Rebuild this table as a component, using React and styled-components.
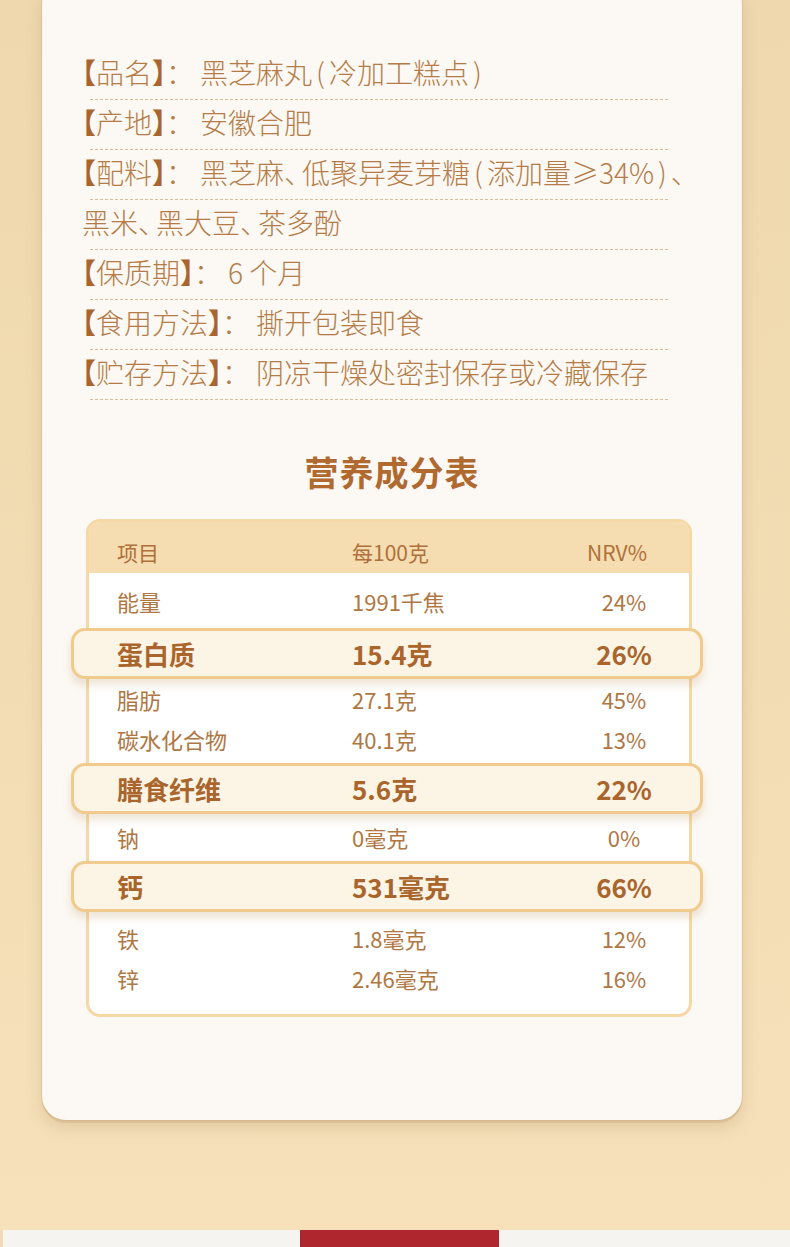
import React from "react";
import styled, { createGlobalStyle } from "styled-components";

const Global = createGlobalStyle`
  html, body { margin: 0; padding: 0; }
  body {
    background: #f2dcb3;
    font-family: "Noto Sans CJK SC", "Noto Sans", sans-serif;
  }
`;

const Page = styled.div`
  width: 790px;
  height: 1247px;
  overflow: hidden;
  display: flex;
  flex-direction: column;
  background: linear-gradient(180deg, #efd8ae 0%, #f3ddb4 60%, #f6e1bb 100%);
`;

const Card = styled.div`
  margin: -20px 0 0 42px;
  width: 700px;
  box-sizing: border-box;
  padding: 70px 40px 103px;
  background: #fcf9f4;
  border-radius: 24px;
  box-shadow: 0 0 0 1px rgba(205, 168, 120, 0.35), 0 3px 0 #dcc198,
    0 8px 16px rgba(160, 120, 70, 0.22);
  display: flex;
  flex-direction: column;
`;

const InfoList = styled.div`
  display: flex;
  flex-direction: column;
`;

const InfoRow = styled.div`
  height: 49px;
  display: flex;
  align-items: flex-start;
  font-size: 28px;
  line-height: 44px;
  font-weight: 300;
  color: #b57c48;
  white-space: nowrap;
  font-feature-settings: "halt";
`;

const Divider = styled.div`
  height: 1px;
  margin-left: 8px;
  width: 578px;
  background: repeating-linear-gradient(
    to right,
    #dcbc9c 0 3px,
    transparent 3px 5px
  );
`;

const Bracket = styled.span`
  color: #a9652d;
  font-weight: 700;
`;

const Colon = styled.span`
  margin-right: 20px;
`;

const Dun = styled.span`
  margin-right: 4px;
`;

const Paren = styled.span`
  margin: 0 4px;
`;

const Title = styled.h2`
  margin: 52px 0 0;
  text-align: center;
  font-size: 34px;
  line-height: 40px;
  font-weight: 700;
  color: #b0692f;
  letter-spacing: 1px;
`;

const Table = styled.div`
  margin: 27px 0 0 4px;
  width: 606px;
  box-sizing: border-box;
  border: 3px solid #f6d8a4;
  border-radius: 14px;
  background: #ffffff;
  padding-bottom: 16px;
  display: flex;
  flex-direction: column;
`;

const Grid = styled.div`
  display: grid;
  grid-template-columns: 235px 200px 144px;
  align-items: center;
  box-sizing: border-box;
`;

const Header = styled(Grid)`
  height: 51px;
  padding: 8px 0 0 28px;
  background: #f5dcb1;
  border-radius: 11px 11px 0 0;
  font-size: 21px;
  color: #b0703a;
`;

const Row = styled(Grid)`
  height: 40px;
  padding-left: 28px;
  margin-top: ${(p) => p.$mt || 0}px;
  margin-bottom: ${(p) => p.$mb || 0}px;
  font-size: 22px;
  color: #b07743;
`;

const Pill = styled(Grid)`
  position: relative;
  z-index: 1;
  height: 51px;
  margin: 0 -14px 0 -18px;
  padding-left: 43px;
  background: #fcf4e4;
  border: 3px solid #f0cb8d;
  border-radius: 14px;
  box-shadow: 0 6px 9px rgba(190, 150, 100, 0.25);
  font-size: 26px;
  font-weight: 700;
  color: #a9652c;
`;

const Cell = styled.span`
  white-space: nowrap;
  text-align: ${(p) => (p.$center ? "center" : "left")};
  padding-right: ${(p) => p.$shift || 0}px;
`;

const Spacer = styled.div`
  flex: 1;
`;

const Strip = styled.div`
  height: 17px;
  display: grid;
  grid-template-columns: 3px 297px 199px 1fr;
`;

const StripPart = styled.div`
  background: ${(p) => p.$c};
`;

const info = [
  {
    label: "品名",
    value: (
      <>
        黑芝麻丸<Paren>(</Paren>冷加工糕点<Paren>)</Paren>
      </>
    ),
  },
  { label: "产地", value: "安徽合肥" },
  {
    label: "配料",
    value: (
      <>
        黑芝麻<Dun>、</Dun>低聚异麦芽糖<Paren>(</Paren>添加量≥34%
        <Paren>)</Paren>
        <Dun>、</Dun>
      </>
    ),
  },
  {
    value: (
      <>
        黑米<Dun>、</Dun>黑大豆<Dun>、</Dun>茶多酚
      </>
    ),
  },
  { label: "保质期", value: "6 个月" },
  { label: "食用方法", value: "撕开包装即食" },
  { label: "贮存方法", value: "阴凉干燥处密封保存或冷藏保存" },
];

const rows = [
  { type: "row", a: "能量", b: "1991千焦", c: "24%", mt: 8, mb: 7 },
  { type: "pill", a: "蛋白质", b: "15.4克", c: "26%" },
  { type: "row", a: "脂肪", b: "27.1克", c: "45%" },
  { type: "row", a: "碳水化合物", b: "40.1克", c: "13%", mb: 4 },
  { type: "pill", a: "膳食纤维", b: "5.6克", c: "22%" },
  { type: "row", a: "钠", b: "0毫克", c: "0%", mt: 3, mb: 4 },
  { type: "pill", a: "钙", b: "531毫克", c: "66%" },
  { type: "row", a: "铁", b: "1.8毫克", c: "12%", mt: 6 },
  { type: "row", a: "锌", b: "2.46毫克", c: "16%" },
];

export default function App() {
  return (
    <>
      <Global />
      <Page>
        <Card>
          <InfoList>
            {info.map((it, i) => (
              <React.Fragment key={i}>
                <InfoRow>
                  {it.label && (
                    <>
                      <Bracket>【</Bracket>
                      {it.label}
                      <Bracket>】</Bracket>
                      <Colon>：</Colon>
                    </>
                  )}
                  {it.value}
                </InfoRow>
                <Divider />
              </React.Fragment>
            ))}
          </InfoList>
          <Title>营养成分表</Title>
          <Table>
            <Header>
              <Cell>项目</Cell>
              <Cell>每100克</Cell>
              <Cell $center $shift={14}>NRV%</Cell>
            </Header>
            {rows.map((r, i) =>
              r.type === "pill" ? (
                <Pill key={i}>
                  <Cell>{r.a}</Cell>
                  <Cell>{r.b}</Cell>
                  <Cell $center>{r.c}</Cell>
                </Pill>
              ) : (
                <Row key={i} $mt={r.mt} $mb={r.mb}>
                  <Cell>{r.a}</Cell>
                  <Cell>{r.b}</Cell>
                  <Cell $center>{r.c}</Cell>
                </Row>
              )
            )}
          </Table>
        </Card>
        <Spacer />
        <Strip>
          <StripPart $c="#f0dbb2" />
          <StripPart $c="#f6f4f0" />
          <StripPart $c="#b0262f" />
          <StripPart $c="#f6f4f0" />
        </Strip>
      </Page>
    </>
  );
}
